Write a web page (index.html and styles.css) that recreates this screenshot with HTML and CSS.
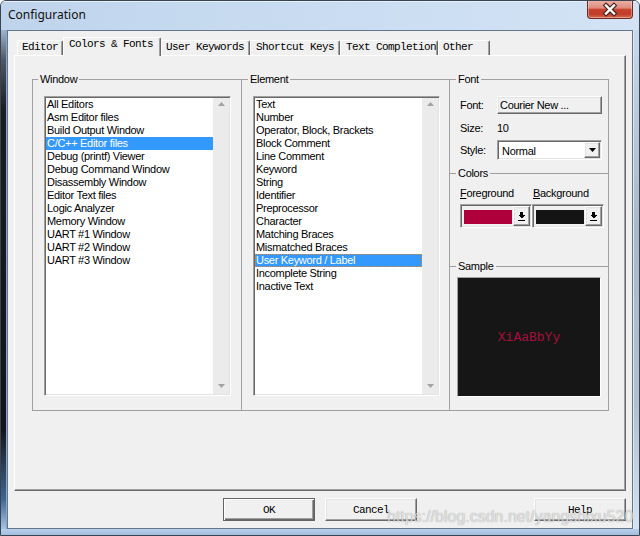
FILE: index.html
```html
<!DOCTYPE html>
<html>
<head>
<meta charset="utf-8">
<title>Configuration</title>
<link rel="stylesheet" href="styles.css">
</head>
<body>
<div class="window">
  <div class="titlebar">
    <span class="title">Configuration</span>
    <div class="close-btn">
      <svg width="44" height="17" viewBox="0 0 44 17">
        <path d="M18 4.5 L26 12.5 M26 4.5 L18 12.5" stroke="#4a2420" stroke-width="4.6" stroke-linecap="square" fill="none"/>
        <path d="M18 4.5 L26 12.5 M26 4.5 L18 12.5" stroke="#ffffff" stroke-width="2.4" stroke-linecap="square" fill="none"/>
      </svg>
    </div>
  </div>
  <div class="body-row">
    <div class="frame-left"></div>
    <div class="client">
      <div class="tabs">
        <div class="tab tab-editor">Editor</div>
        <div class="tab tab-active">Colors &amp; Fonts</div>
        <div class="tab tab-keywords">User Keywords</div>
        <div class="tab tab-shortcut">Shortcut Keys</div>
        <div class="tab tab-completion">Text Completion</div>
        <div class="tab tab-other">Other</div>
      </div>
      <div class="panel">
        <div class="groups">
          <div class="grp grp-window">
            <span class="grp-label">Window</span>
            <div class="listbox sunken">
              <div class="list-items">
                <div class="item">All Editors</div>
                <div class="item">Asm Editor files</div>
                <div class="item">Build Output Window</div>
                <div class="item item-sel">C/C++ Editor files</div>
                <div class="item">Debug (printf) Viewer</div>
                <div class="item">Debug Command Window</div>
                <div class="item">Disassembly Window</div>
                <div class="item">Editor Text files</div>
                <div class="item">Logic Analyzer</div>
                <div class="item">Memory Window</div>
                <div class="item">UART #1 Window</div>
                <div class="item">UART #2 Window</div>
                <div class="item">UART #3 Window</div>
              </div>
              <div class="vscroll">
                <svg width="7" height="4" viewBox="0 0 7 4"><path d="M0 4 L3.5 0 L7 4 Z" fill="#a3a3a3"/></svg>
                <svg width="7" height="4" viewBox="0 0 7 4"><path d="M0 0 L7 0 L3.5 4 Z" fill="#a3a3a3"/></svg>
              </div>
            </div>
          </div>
          <div class="grp grp-element">
            <span class="grp-label grp-label-el">Element</span>
            <div class="listbox sunken">
              <div class="list-items">
                <div class="item">Text</div>
                <div class="item">Number</div>
                <div class="item">Operator, Block, Brackets</div>
                <div class="item">Block Comment</div>
                <div class="item">Line Comment</div>
                <div class="item">Keyword</div>
                <div class="item">String</div>
                <div class="item">Identifier</div>
                <div class="item">Preprocessor</div>
                <div class="item">Character</div>
                <div class="item">Matching Braces</div>
                <div class="item">Mismatched Braces</div>
                <div class="item item-sel item-focus">User Keyword / Label</div>
                <div class="item">Incomplete String</div>
                <div class="item">Inactive Text</div>
              </div>
              <div class="vscroll">
                <svg width="7" height="4" viewBox="0 0 7 4"><path d="M0 4 L3.5 0 L7 4 Z" fill="#a3a3a3"/></svg>
                <svg width="7" height="4" viewBox="0 0 7 4"><path d="M0 0 L7 0 L3.5 4 Z" fill="#a3a3a3"/></svg>
              </div>
            </div>
          </div>
          <div class="rcol">
            <div class="sec sec-font">
              <span class="grp-label grp-label-r">Font</span>
              <div class="frow frow1">
                <span class="flabel">Font:</span>
                <div class="font-btn raised">Courier New ...</div>
              </div>
              <div class="frow frow2">
                <span class="flabel">Size:</span>
                <span>10</span>
              </div>
              <div class="frow frow3">
                <span class="flabel">Style:</span>
                <div class="combo sunken">
                  <span class="combo-text">Normal</span>
                  <div class="combo-btn raised">
                    <svg width="7" height="4" viewBox="0 0 7 4"><path d="M0 0 L7 0 L3.5 4 Z" fill="#000"/></svg>
                  </div>
                </div>
              </div>
            </div>
            <div class="sec sec-colors">
              <span class="grp-label grp-label-r">Colors</span>
              <div class="crow-labels">
                <span class="clabel"><u>F</u>oreground</span>
                <span class="clabel"><u>B</u>ackground</span>
              </div>
              <div class="crow-pickers">
                <div class="picker sunken">
                  <div class="swatch-cell"><div class="swatch swatch-fg"></div></div>
                  <div class="pick-btn raised">
                    <svg width="7" height="9" viewBox="0 0 7 9" shape-rendering="crispEdges"><path d="M2 0 H5 V3 H7 L3.5 6.5 L0 3 H2 Z" fill="#000"/><rect x="0" y="8" width="7" height="1" fill="#000"/></svg>
                  </div>
                </div>
                <div class="picker sunken">
                  <div class="swatch-cell"><div class="swatch swatch-bg"></div></div>
                  <div class="pick-btn raised">
                    <svg width="7" height="9" viewBox="0 0 7 9" shape-rendering="crispEdges"><path d="M2 0 H5 V3 H7 L3.5 6.5 L0 3 H2 Z" fill="#000"/><rect x="0" y="8" width="7" height="1" fill="#000"/></svg>
                  </div>
                </div>
              </div>
            </div>
            <div class="sec sec-sample">
              <span class="grp-label grp-label-r">Sample</span>
              <div class="sample-box"><span class="sample-text">XiAaBbYy</span></div>
            </div>
          </div>
        </div>
      </div>
      <div class="buttons">
        <div class="btn btn-default">OK</div>
        <div class="btn btn-cancel">Cancel</div>
        <div class="btn btn-help">Help</div>
      </div>
    </div>
    <div class="frame-right"></div>
  </div>
  <div class="frame-bottom"></div>
  <div class="watermark">https://blog.csdn.net/yangshixu520</div>
</div>
</body>
</html>
```
FILE: styles.css
```css
* { box-sizing: border-box; }
html, body { margin: 0; padding: 0; background: #ffffff; }
body {
  width: 640px; height: 536px; overflow: hidden;
  font-family: "Liberation Sans", Arial, sans-serif;
  font-size: 11px; color: #000;
}
.window {
  position: relative;
  width: 640px; height: 536px;
  display: flex; flex-direction: column;
  border: 1px solid #3a4552;
  border-radius: 6px 6px 0 0;
  overflow: hidden;
  background: linear-gradient(to bottom, #d5e4f5 0, #c4d8ef 29px, #8d9fb4 100%);
}
.titlebar {
  height: 29px; flex-shrink: 0;
  display: flex; justify-content: space-between; align-items: flex-start;
  background: linear-gradient(to right, #bfd4ec 0%, #c9dcf1 50%, #d3e3f5 100%);
  box-shadow: inset 0 1px 0 #e6f0fa;
}
.title {
  margin: 5px 0 0 7px;
  font-family: "Noto Sans", "Open Sans", sans-serif;
  font-size: 12px; line-height: 17px; color: #111;
}
.close-btn {
  width: 46px; height: 19px; margin: -1px 6px 0 0;
  border: 1px solid #6e2b22; border-top: none;
  border-radius: 0 0 4px 4px;
  background: linear-gradient(to bottom, #ebb4aa 0%, #de8a7b 45%, #c9442f 52%, #c03c28 78%, #d66c52 100%);
  box-shadow: inset 0 0 0 1px rgba(255,255,255,0.35);
  display: flex; align-items: center; justify-content: center;
}
.body-row { display: flex; height: 499px; flex-shrink: 0; }
.frame-left {
  width: 6px; flex-shrink: 0;
  background: linear-gradient(to bottom, #9fb4cd 0%, #4d5866 6%, #1c1d20 16%, #141517 80%, #3f6592 94%, #a7c4e6 100%);
  box-shadow: inset -1px 0 #86a6cc;
}
.frame-right {
  width: 6px; flex-shrink: 0;
  background: linear-gradient(to bottom, #c6d8ec 0%, #aab8c8 40%, #b2c0ce 75%, #d4e3f2 100%);
  box-shadow: inset 1px 0 #dfe8f2;
}
.frame-bottom {
  height: 6px; flex-shrink: 0;
  background: linear-gradient(to bottom, #b7cfea, #a2bddf);
}
.client {
  width: 626px; height: 499px; flex-shrink: 0;
  border: 1px solid #66768a;
  background: #f0f0f0;
  padding: 6px 0 0 6px;
  display: flex; flex-direction: column;
}

/* tabs */
.tabs {
  display: flex; align-items: flex-end;
  height: 18px; margin-left: 3px;
  position: relative; z-index: 1;
}
.tab {
  height: 15px;
  border-top: 1px solid #fff; border-left: 1px solid #fff; border-right: 1px solid #696969;
  box-shadow: inset -1px 0 #a0a0a0;
  border-radius: 2px 2px 0 0;
  background: #f0f0f0;
  padding-left: 4px;
  font-family: "Liberation Mono", "Courier New", monospace;
  font-size: 11px; letter-spacing: -0.6px; line-height: 13px;
  white-space: nowrap;
}
.tab-editor { width: 46px; }
.tab-active { width: 98px; height: 19px; margin-bottom: -1px; padding-left: 5px; }
.tab-keywords { width: 89px; }
.tab-shortcut { width: 90px; padding-left: 5px; }
.tab-completion { width: 98px; padding-left: 5px; }
.tab-other { width: 52px; }

.panel {
  width: 612px; height: 436px;
  border-top: 1px solid #fff; border-left: 1px solid #fff;
  border-right: 1px solid #696969; border-bottom: 1px solid #696969;
  box-shadow: inset -1px -1px #a0a0a0;
  padding: 23px 0 0 17px;
}
.groups { display: flex; height: 332px; }
.grp {
  border: 1px solid #a0a0a0;
  padding-left: 11px;
}
.grp-window { width: 210px; }
.grp-element { width: 208px; border-left: none; }
.grp-label {
  display: block; width: max-content;
  height: 15px; line-height: 15px;
  margin: -8px 0 0 -6px; padding: 0 2px;
  background: #f0f0f0;
  letter-spacing: -0.3px;
}
.grp-label-el { margin-left: -5px; }
.grp-label-r { margin-left: -4px; }

/* listbox */
.sunken {
  border: 1px solid;
  border-color: #a0a0a0 #fff #fff #a0a0a0;
  box-shadow: inset 1px 1px #696969, inset -1px -1px #e3e3e3;
}
.raised {
  border: 1px solid;
  border-color: #fff #696969 #696969 #fff;
  box-shadow: inset -1px -1px #a0a0a0, inset 1px 1px #e3e3e3;
  background: #f0f0f0;
}
.listbox {
  margin-top: 9px;
  width: 187px; height: 300px;
  background: #fff;
  padding: 1px;
  display: flex;
}
.list-items { flex: 1; background: #fff; }
.item {
  height: 13px; line-height: 13px;
  padding-left: 1px;
  white-space: nowrap;
  letter-spacing: -0.3px;
}
.item-sel { background: #3399ff; color: #fff; }
.item-focus { outline: 1px dotted #e8852c; outline-offset: -1px; }
.vscroll {
  width: 16px;
  background: #ebebeb;
  display: flex; flex-direction: column; align-items: center; justify-content: space-between;
  padding: 4px 0 6px 0;
}

/* right column */
.rcol { width: 159px; display: flex; flex-direction: column; }
.sec {
  border-top: 1px solid #a0a0a0;
  border-right: 1px solid #a0a0a0;
  padding-left: 10px;
}
.sec-font { height: 94px; }
.sec-colors { height: 93px; }
.sec-sample { flex: 1; border-bottom: 1px solid #a0a0a0; }
.frow { display: flex; align-items: center; letter-spacing: -0.3px; }
.frow1 { margin-top: 9px; height: 18px; }
.frow2 { margin-top: 6px; height: 16px; }
.frow3 { margin-top: 4px; height: 20px; }
.flabel { width: 37px; }
.font-btn {
  width: 105px; height: 18px;
  padding-left: 2px; line-height: 16px;
  white-space: nowrap;
}
.combo {
  width: 105px; height: 20px;
  background: #fff;
  padding: 1px;
  display: flex;
}
.combo-text { flex: 1; padding-left: 3px; line-height: 18px; }
.combo-btn {
  width: 16px;
  display: flex; align-items: center; justify-content: center;
}
.crow-labels { margin-top: 5px; height: 14px; display: flex; align-items: center; letter-spacing: -0.3px; }
.clabel { width: 73px; }
.crow-pickers { margin-top: 4px; display: flex; }
.picker {
  width: 72px; height: 24px;
  padding: 1px;
  display: flex;
  background: #f0f0f0;
}
.swatch-cell { width: 51px; padding: 4px 1px 0 2px; }
.swatch { width: 48px; height: 14px; }
.swatch-fg { background: #b0003c; }
.swatch-bg { background: #141414; }
.pick-btn {
  flex: 1;
  display: flex; align-items: center; justify-content: center;
}
.sample-box {
  margin: 3px 0 0 -3px;
  width: 144px; height: 120px;
  background: #161616;
  border: 1px solid;
  border-color: #a0a0a0 #fff #fff #a0a0a0;
  display: flex; align-items: center; justify-content: center;
}
.sample-text {
  font-family: "Liberation Mono", "Courier New", monospace;
  font-size: 13px;
  color: #a60e3c;
}

/* buttons */
.buttons {
  display: flex;
  margin-top: 7px;
  padding: 0 6px 0 209px;
}
.btn {
  width: 92px; height: 23px;
  border: 1px solid;
  border-color: #fff #696969 #696969 #fff;
  box-shadow: inset -1px -1px #a0a0a0, inset 1px 1px #e3e3e3;
  display: flex; align-items: center; justify-content: center;
  font-family: "Liberation Mono", "Courier New", monospace;
  font-size: 11px; letter-spacing: -0.6px;
}
.btn-default {
  border: 1px solid #646464;
  box-shadow: inset 1px 1px #fff, inset -1px -1px #696969, inset -2px -2px #a0a0a0;
}
.btn-cancel { margin-left: 10px; }
.btn-help { margin-left: auto; }

.watermark {
  position: absolute;
  left: 386px; top: 507px;
  font-family: "Liberation Sans", Arial, sans-serif;
  font-size: 16px;
  color: rgba(255,255,255,0.72);
  text-shadow: 0 0 1px rgba(0,0,0,0.45);
  white-space: nowrap;
}
```
